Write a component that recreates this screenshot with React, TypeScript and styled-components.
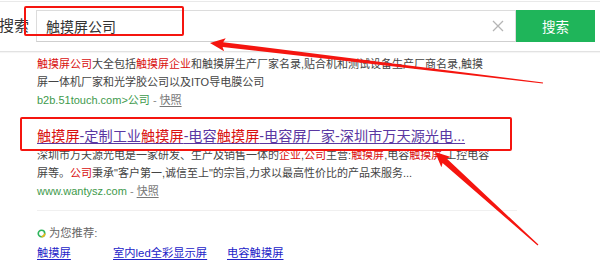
import React from "react";
import styled, { createGlobalStyle } from "styled-components";

const GlobalStyle = createGlobalStyle`
	html, body {
		margin: 0;
		padding: 0;
		background: #fff;
		overflow: hidden;
	}
	body {
		font-family: "Liberation Sans", "Noto Sans CJK SC", sans-serif;
		color: #333;
	}
`;

type Pt = [number, number];

// tapered red annotation arrow, thin at the tail and thick near the head
const arrowPoints = (
	tip: Pt,
	tail: Pt,
	headLen: number,
	headHalf: number,
	shaftHead: number,
	shaftTail: number
) => {
	const dx = tail[0] - tip[0];
	const dy = tail[1] - tip[1];
	const len = Math.hypot(dx, dy);
	const ux = dx / len;
	const uy = dy / len;
	const px = -uy;
	const py = ux;
	const bx = tip[0] + ux * headLen;
	const by = tip[1] + uy * headLen;
	const pts: Pt[] = [
		tip,
		[bx + px * headHalf, by + py * headHalf],
		[bx - ux * 2 + px * shaftHead, by - uy * 2 + py * shaftHead],
		[tail[0] + px * shaftTail, tail[1] + py * shaftTail],
		[tail[0] - px * shaftTail, tail[1] - py * shaftTail],
		[bx - ux * 2 - px * shaftHead, by - uy * 2 - py * shaftHead],
		[bx - px * headHalf, by - py * headHalf],
	];
	return pts.map((p) => `${p[0].toFixed(1)},${p[1].toFixed(1)}`).join(" ");
};

export default function App() {
	return (
		<Page>
			<GlobalStyle />
			<Header>
				<SearchLabel>搜索</SearchLabel>
				<SearchBox>
					<SearchText>触摸屏公司</SearchText>
					<ClearIcon>
						<svg width="12" height="12" viewBox="0 0 12 12">
							<path d="M1 1 L11 11 M11 1 L1 11" stroke="#b5b5b5" strokeWidth="1.3" />
						</svg>
					</ClearIcon>
				</SearchBox>
				<SearchButton>搜索</SearchButton>
			</Header>

			<Results>
				<Result>
					<Line>
						<Em>触摸屏公司</Em>大全包括<Em>触摸屏企业</Em>和触摸屏生产厂家名录,贴合机和测试设备生产厂商名录,触摸
					</Line>
					<Line>屏一体机厂家和光学胶公司以及ITO导电膜公司</Line>
					<UrlLine>
						<Url>b2b.51touch.com&gt;公司</Url>
						<Dash> - </Dash>
						<Snapshot>快照</Snapshot>
					</UrlLine>
				</Result>

				<Result $gap={17}>
					<Title>
						<TitleEm>触摸屏</TitleEm>-定制工业<TitleEm>触摸屏</TitleEm>-电容<TitleEm>触摸屏</TitleEm>-电容屏厂家-深圳市万天源光电...
					</Title>
					<Line>
						深圳市万天源光电是一家研发、生产及销售一体的<Em>企业</Em>,<Em>公司</Em>主营:<Em>触摸屏</Em>,电容<Em>触摸屏</Em>,工控电容
					</Line>
					<Line>
						屏等。<Em>公司</Em>秉承"客户第一,诚信至上"的宗旨,力求以最高性价比的产品来服务...
					</Line>
					<UrlLine>
						<Url>www.wantysz.com</Url>
						<Dash> - </Dash>
						<Snapshot>快照</Snapshot>
					</UrlLine>
				</Result>

				<Divider />

				<Recommend>
					<RecommendHead>
						<svg width="9" height="9" viewBox="0 0 10 10">
							<circle cx="5" cy="5" r="3.6" fill="none" stroke="#2db45b" strokeWidth="1.8" />
							<path d="M8.6 5 A3.6 3.6 0 0 1 5 8.6" fill="none" stroke="#f5b814" strokeWidth="1.8" />
						</svg>
						<span>为您推荐:</span>
					</RecommendHead>
					<RecommendLinks>
						<RecLink $width={76}>触摸屏</RecLink>
						<RecLink $width={114}>室内led全彩显示屏</RecLink>
						<RecLink>电容触摸屏</RecLink>
					</RecommendLinks>
				</Recommend>
			</Results>

			<MarkBox $left={24} $top={6} $width={160} $height={30} />
			<MarkBox $left={20} $top={117} $width={492} $height={34} />

			<Arrows width="600" height="261" viewBox="0 0 600 261">
				<polygon points={arrowPoints([210, 43], [543, 83], 15, 6.5, 2.4, 0.6)} fill="#f5150f" />
				<polygon points={arrowPoints([435, 152], [538, 245], 15, 7, 3, 0.6)} fill="#f5150f" />
			</Arrows>
		</Page>
	);
}

const Page = styled.div`
	position: relative;
	width: 600px;
	height: 261px;
	overflow: hidden;
	background: #fff;
`;

const Header = styled.div`
	display: flex;
	align-items: center;
	height: 51px;
	margin-top: 1px;
	border-top: 1px solid #e9e9e9;
	border-bottom: 1px solid #e2e2e2;
	box-shadow: 0 1px 1px rgba(0, 0, 0, 0.04);
	padding-bottom: 2px;
	box-sizing: border-box;
`;

const SearchLabel = styled.div`
	width: 37px;
	margin-left: -1px;
	font-size: 15px;
	color: #333;
	line-height: 32px;
`;

const SearchBox = styled.div`
	display: flex;
	align-items: center;
	justify-content: space-between;
	width: 480px;
	height: 32px;
	box-sizing: border-box;
	border: 1px solid #dcdcdc;
	border-bottom-color: #cfcfcf;
	padding: 0 10px 0 9px;
`;

const SearchText = styled.span`
	font-size: 14px;
	color: #333;
`;

const ClearIcon = styled.span`
	display: flex;
	align-items: center;
	margin-right: 1px;
`;

const SearchButton = styled.div`
	display: flex;
	align-items: center;
	justify-content: center;
	width: 79px;
	height: 32px;
	background: #1fb55a;
	color: #fff;
	font-size: 13.5px;
`;

const Results = styled.div`
	padding-left: 37px;
	width: 480px;
`;

const Result = styled.div<{ $gap?: number }>`
	margin-top: ${({ $gap }) => $gap ?? 3}px;
`;

const Line = styled.div`
	font-size: 11px;
	line-height: 18px;
	color: #444;
	white-space: nowrap;
`;

const Em = styled.span`
	color: #d90f0f;
`;

const UrlLine = styled.div`
	font-size: 11px;
	line-height: 18px;
	white-space: nowrap;
`;

const Url = styled.span`
	color: #3e9a4c;
`;

const Dash = styled.span`
	color: #888;
	white-space: pre;
`;

const Snapshot = styled.span`
	color: #777;
	text-decoration: underline;
	text-underline-offset: 2px;
`;

const Title = styled.div`
	font-size: 14.2px;
	line-height: 20px;
	color: #5a37a2;
	text-decoration: underline;
	text-underline-offset: 2px;
	white-space: nowrap;
`;

const TitleEm = styled.span`
	color: #d90f0f;
`;

const Divider = styled.div`
	height: 1px;
	background: #f0f0f0;
	margin-top: 10px;
`;

const Recommend = styled.div`
	padding-top: 14px;
`;

const RecommendHead = styled.div`
	display: flex;
	align-items: center;
	gap: 3px;
	font-size: 11.3px;
	line-height: 16px;
	color: #666;
`;

const RecommendLinks = styled.div`
	display: flex;
	margin-top: 4px;
`;

const RecLink = styled.span<{ $width?: number }>`
	width: ${({ $width }) => ($width ? `${$width}px` : "auto")};
	font-size: 11.3px;
	line-height: 16px;
	color: #2323c8;
	text-decoration: underline;
	text-underline-offset: 2px;
	white-space: nowrap;
`;

const MarkBox = styled.div<{ $left: number; $top: number; $width: number; $height: number }>`
	position: absolute;
	left: ${({ $left }) => $left}px;
	top: ${({ $top }) => $top}px;
	width: ${({ $width }) => $width}px;
	height: ${({ $height }) => $height}px;
	box-sizing: border-box;
	border: 2.5px solid #f5150f;
	border-radius: 2px;
	pointer-events: none;
`;

const Arrows = styled.svg`
	position: absolute;
	left: 0;
	top: 0;
	pointer-events: none;
`;
